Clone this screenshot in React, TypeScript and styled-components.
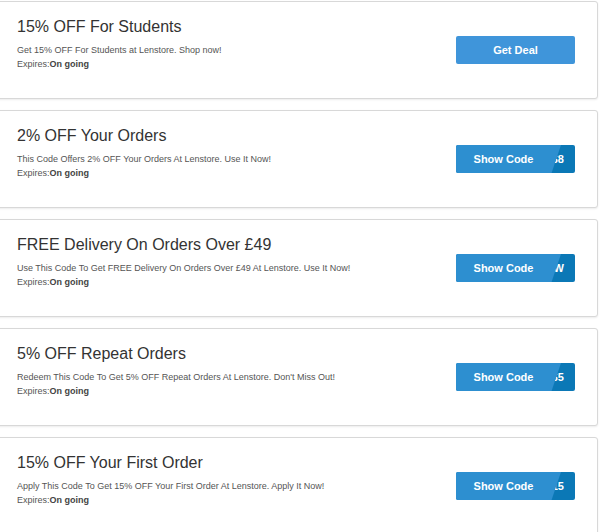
import React from "react";
import styled, { createGlobalStyle } from "styled-components";

const Global = createGlobalStyle`
  html, body { margin: 0; padding: 0; background: #fff; }
  body { font-family: "Liberation Sans", Arial, sans-serif; overflow: hidden; }
`;

const List = styled.div`
  display: flex;
  flex-direction: column;
  gap: 11px;
  padding-top: 1px;
  margin-left: -3px;
  width: 601px;
`;

const Card = styled.div`
  box-sizing: border-box;
  height: 98px;
  display: flex;
  align-items: center;
  justify-content: space-between;
  background: #fff;
  border: 1px solid #d8d8d8;
  border-radius: 3px;
  box-shadow: 0 1px 2px rgba(0, 0, 0, 0.08);
  padding: 0 22px 0 19px;
`;

const Info = styled.div`
  display: flex;
  flex-direction: column;
  align-self: flex-start;
  padding-top: 15px;
`;

const Title = styled.div`
  font-size: 16px;
  line-height: 20px;
  color: #333;
  margin-bottom: 6px;
`;

const Desc = styled.div`
  font-size: 9px;
  line-height: 14px;
  color: #555;
`;

const Expires = styled.div`
  font-size: 9px;
  line-height: 14px;
  color: #555;
  b { color: #444; font-weight: bold; }
`;

const DealButton = styled.button`
  width: 119px;
  height: 28px;
  border: none;
  border-radius: 2px;
  background: #3f95da;
  color: #fff;
  font-family: "Liberation Sans", Arial, sans-serif;
  font-weight: bold;
  font-size: 11px;
  padding: 0;
`;

const CodeButton = styled.button`
  position: relative;
  width: 119px;
  height: 28px;
  border: none;
  border-radius: 2px;
  background: #0b78b6;
  color: #fff;
  font-family: "Liberation Sans", Arial, sans-serif;
  font-weight: bold;
  font-size: 11px;
  padding: 0 11px 0 0;
  display: flex;
  align-items: center;
  justify-content: flex-end;
  overflow: hidden;
`;

const CodeFront = styled.span`
  position: absolute;
  left: 0;
  top: 0;
  bottom: 0;
  width: 105px;
  display: flex;
  align-items: center;
  justify-content: center;
  padding-right: 10px;
  box-sizing: border-box;
  background: #2d8fd0;
  clip-path: polygon(0 0, 100% 0, 91% 100%, 0 100%);
`;

type Offer = { title: string; desc: string; code?: string };

const offers: Offer[] = [
  { title: "15% OFF For Students", desc: "Get 15% OFF For Students at Lenstore. Shop now!" },
  { title: "2% OFF Your Orders", desc: "This Code Offers 2% OFF Your Orders At Lenstore. Use It Now!", code: "LS8" },
  { title: "FREE Delivery On Orders Over £49", desc: "Use This Code To Get FREE Delivery On Orders Over £49 At Lenstore. Use It Now!", code: "NEW" },
  { title: "5% OFF Repeat Orders", desc: "Redeem This Code To Get 5% OFF Repeat Orders At Lenstore. Don't Miss Out!", code: "LS5" },
  { title: "15% OFF Your First Order", desc: "Apply This Code To Get 15% OFF Your First Order At Lenstore. Apply It Now!", code: "NEW15" },
];

export default function App() {
  return (
    <>
      <Global />
      <List>
        {offers.map((o) => (
          <Card key={o.title}>
            <Info>
              <Title>{o.title}</Title>
              <Desc>{o.desc}</Desc>
              <Expires>
                Expires:<b>On going</b>
              </Expires>
            </Info>
            {o.code ? (
              <CodeButton>
                {o.code}
                <CodeFront>Show Code</CodeFront>
              </CodeButton>
            ) : (
              <DealButton>Get Deal</DealButton>
            )}
          </Card>
        ))}
      </List>
    </>
  );
}
